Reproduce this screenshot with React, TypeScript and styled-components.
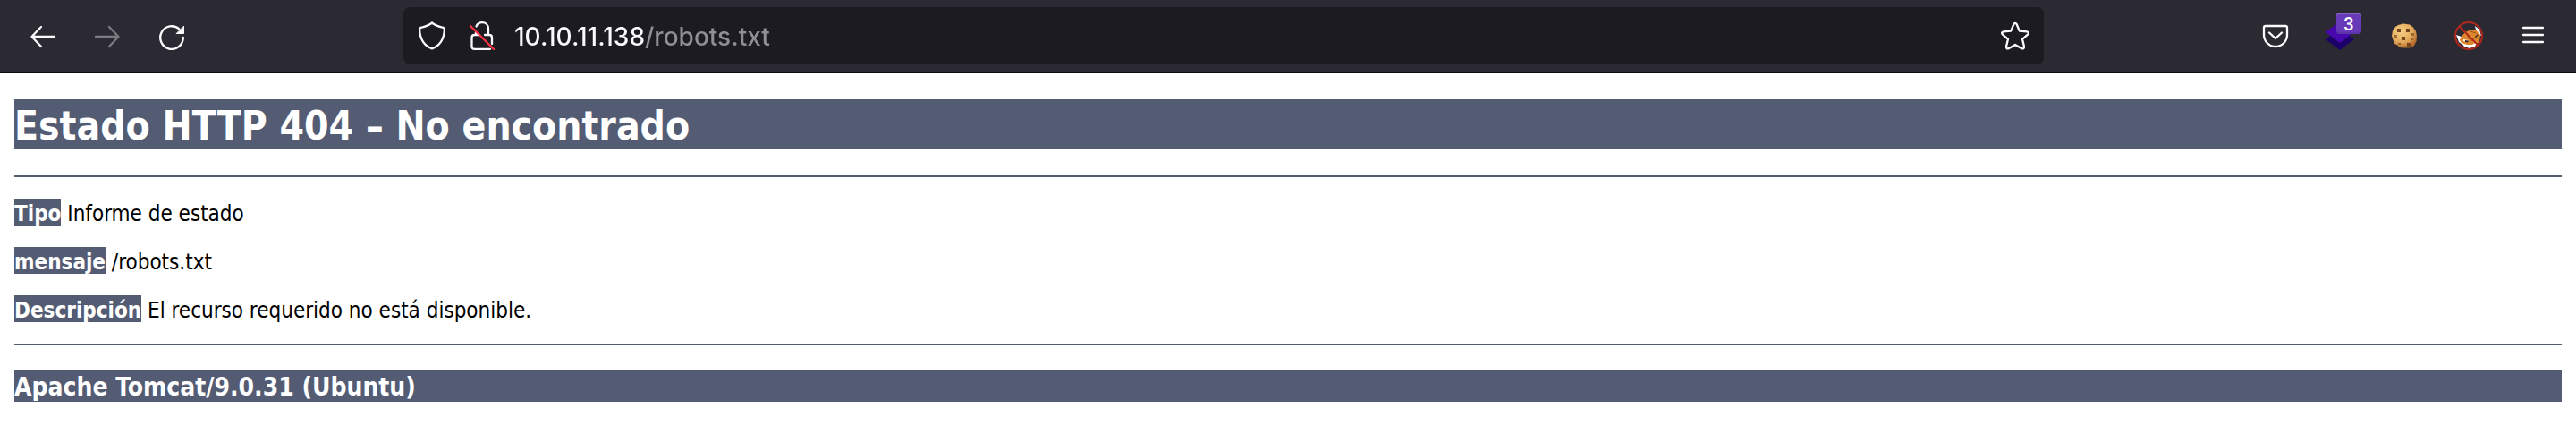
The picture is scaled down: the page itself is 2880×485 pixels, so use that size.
import React from "react";
import styled, { createGlobalStyle } from "styled-components";

const slate = "#545c74";

const GlobalStyle = createGlobalStyle`
  * { box-sizing: border-box; }
  body {
    margin: 0;
    background: #fff;
    color: #000;
    font-family: "DejaVu Sans Condensed", "DejaVu Sans", sans-serif;
    font-size: 24px;
    line-height: 26px;
  }
`;

const Toolbar = styled.header`
  display: flex;
  align-items: center;
  padding: 8px 12px;
  background: #2b2a33;
  border-bottom: 2px solid #0c0c0d;
  color: #fbfbfe;
`;

const Group = styled.div`
  display: flex;
  flex: none;
`;

const Spring = styled.div`
  flex: 1 1 0;
`;

const IconButton = styled.button<{ $width?: number }>`
  position: relative;
  display: flex;
  flex: none;
  align-items: center;
  justify-content: center;
  width: ${(p) => p.$width ?? 72}px;
  height: 64px;
  padding: 0;
  border: 0;
  background: none;
  color: inherit;

  &:disabled {
    color: #7c7b81;
  }
`;

const Icon = styled.svg.attrs({ viewBox: "0 0 32 32", "aria-hidden": true })`
  display: block;
  width: 32px;
  height: 32px;
  fill: none;
  stroke: currentColor;
  stroke-width: 2.3;
  stroke-linecap: round;
  stroke-linejoin: round;
`;

const Badge = styled.span`
  position: absolute;
  top: 6px;
  left: 32px;
  width: 28px;
  height: 24px;
  border-radius: 4px;
  background: #673ab7;
  box-shadow: inset 0 2px #8561c5, inset 0 -2px #5d34a5;
  color: #fff;
  font: 500 20px/26px Roboto, sans-serif;
  text-align: center;
`;

const AddressBar = styled.form`
  display: flex;
  flex: 8 1 50px;
  min-width: 0;
  padding: 0 4px;
  border-radius: 8px;
  background: #1c1b22;
`;

const Address = styled.input`
  flex: 1;
  min-width: 0;
  padding: 2px 0 0;
  margin-left: 8px;
  border: 0;
  outline: 0;
  background: linear-gradient(to right, #fbfbfe 146px, #8f8f95 146px);
  background-clip: text;
  -webkit-text-fill-color: transparent;
  color: #fbfbfe;
  font: 500 28px/40px Inter, sans-serif;
`;

const Page = styled.main`
  padding: 29px 16px 36px;
`;

const Title = styled.h1`
  margin: 0 0 30px;
  padding-top: 4px;
  background: ${slate};
  color: #fff;
  font-size: 44px;
  line-height: 51px;
`;

const Footer = styled.h3`
  margin: 28px 0 0;
  padding-top: 3px;
  background: ${slate};
  color: #fff;
  font-size: 28px;
  line-height: 32px;
`;

const Rule = styled.hr`
  height: 2px;
  margin: 0;
  border: 0;
  background: ${slate};
`;

const Detail = styled.p`
  margin: 24px 0;
`;

const Label = styled.b`
  display: inline-block;
  padding-top: 4px;
  background: ${slate};
  color: #fff;
`;

const details = [
  ["Tipo", "Informe de estado"],
  ["mensaje", "/robots.txt"],
  ["Descripción", "El recurso requerido no está disponible."],
];

const Cookie = () => (
  <Icon>
    <defs>
      <radialGradient id="dough" cx="0.38" cy="0.32" r="0.7">
        <stop offset="0" stopColor="#f6cf85" />
        <stop offset="0.65" stopColor="#e2a85a" />
        <stop offset="1" stopColor="#b56a2c" />
      </radialGradient>
    </defs>
    <path stroke="none" fill="url(#dough)" d="M9 4 15 2.4 22 3.5 26 6.5 29 11 30 16 29.6 22 27 27 22 29.6 16 29.4 10.5 29 8.5 26.5 5 25 3.4 20.5 2 16 3 10 6 6Z" />
    <g stroke="none" fill="#75451f">
      <path d="M8 8h4v4H8zM18 8h4v4h-4zM13 17h4v4h-4zM19 24h4v4h-4z" />
      <path opacity=".65" d="M5 15h3v3H5zM24 13h3v3h-3zM23 19h3v2h-3zM9 24h3v2H9z" />
    </g>
  </Icon>
);

const BlockedFox = () => (
  <Icon>
    <g stroke="none">
      <path fill="#fff" d="M2 15 8 17 9 26 5 23ZM23 5 28 9 30 16 25 14Z" />
      <path fill="#df872c" d="M7 18 12 12 19 9 24 9 29 15 28 22 24 27 17 28 9 26 6 21Z" />
      <path fill="#fff" d="M8 24 14 26 20 26 25 23 23 28 17 30 11 28ZM10 20l6 1-2 2-4-1Z" />
      <path fill="#3a2b22" d="M12 21l4 .5-1 2-3-.5ZM23 17l3-3 .5 1.5-3 3Z" />
    </g>
    <path stroke="#9a5720" strokeWidth="1" d="M13 13l4 7M18 11l6 2M22 18l-3 4" />
    <circle cx="16" cy="16" r="15" stroke="#b3261e" strokeWidth="2" />
    <path stroke="#b3261e" strokeWidth="2" d="M6 6 26 26" />
  </Icon>
);

export default function App() {
  return (
    <>
      <GlobalStyle />
      <Toolbar>
        <Group>
          <IconButton aria-label="Atrás">
            <Icon><path d="M29 17H3.500M14 6 3.500 17 14 28" /></Icon>
          </IconButton>
          <IconButton aria-label="Adelante" disabled>
            <Icon><path d="M3 17H28.500M18 6 28.500 17 18 28" /></Icon>
          </IconButton>
          <IconButton aria-label="Recargar">
            <Icon>
              <path d="M28.800 18A12.800 12.800 0 1 1 24.500 8.500" />
              <path fill="currentColor" strokeWidth="1" d="M29.500 5.500V13.500H21.500Z" />
            </Icon>
          </IconButton>
        </Group>
        <Spring />
        <AddressBar onSubmit={(e) => e.preventDefault()}>
          <IconButton type="button" $width={56} aria-label="Protección">
            <Icon>
              <path d="M16 1.500C19 4 24.500 6 28.500 6.800C29.700 7.100 30 8 29.900 9C29.500 19 25 27 16 30.500C7 27 2.500 19 2.100 9C2 8 2.300 7.100 3.500 6.800C7.500 6 13 4 16 1.500Z" />
            </Icon>
          </IconButton>
          <IconButton type="button" $width={56} aria-label="Conexión no segura">
            <Icon>
              <path d="M9.500 5.500C10.500 3 13 1.200 16 1.200C20 1.200 23 4 23 8V15H24C26 15 27 16 27 18V25M9 12V15H7.500C5.500 15 4.500 16 4.500 18V28C4.500 30 5.500 30.800 7.500 30.800H25M9 15H13M19 15H23" />
              <path stroke="#ff3347" d="M3 5 29 31" />
            </Icon>
          </IconButton>
          <Address aria-label="Dirección" defaultValue="10.10.11.138/robots.txt" spellCheck={false} />
          <IconButton type="button" $width={56} aria-label="Añadir a marcadores">
            <Icon>
              <path d="M14.300 3.200Q16 .6 17.700 3.200L20.800 10.600 29 11.300Q32 12 30.200 14.400L24 19.800 26 28Q26.200 31 23.300 30.200L16 25.900 8.700 30.200Q5.800 31 6 28L8 19.800 1.800 14.400Q0 12 3 11.300L11.200 10.600Z" />
            </Icon>
          </IconButton>
        </AddressBar>
        <Spring />
        <Group>
          <IconButton aria-label="Pocket">
            <Icon>
              <path d="M5 5H27Q29 5 29 7V15A13 13 0 0 1 3 15V7Q3 5 5 5ZM9 12.500 16 19 23 12.500" />
            </Icon>
          </IconButton>
          <IconButton aria-label="Wappalyzer">
            <Icon>
              <path stroke="none" fill="#1c0069" d="M16 8 32 20 16 32 0 20Z" />
              <path stroke="none" fill="#4608ad" d="M16 0 32 12 16 24 0 12Z" />
            </Icon>
            <Badge>3</Badge>
          </IconButton>
          <IconButton aria-label="Cookies"><Cookie /></IconButton>
          <IconButton aria-label="FoxyProxy"><BlockedFox /></IconButton>
          <IconButton aria-label="Menú">
            <Icon><path d="M5 7H27M5 15H27M5 23H27" /></Icon>
          </IconButton>
        </Group>
      </Toolbar>
      <Page>
        <Title>Estado HTTP 404 – No encontrado</Title>
        <Rule />
        {details.map(([label, text]) => (
          <Detail key={label}>
            <Label>{label}</Label> {text}
          </Detail>
        ))}
        <Rule />
        <Footer>Apache Tomcat/9.0.31 (Ubuntu)</Footer>
      </Page>
    </>
  );
}
